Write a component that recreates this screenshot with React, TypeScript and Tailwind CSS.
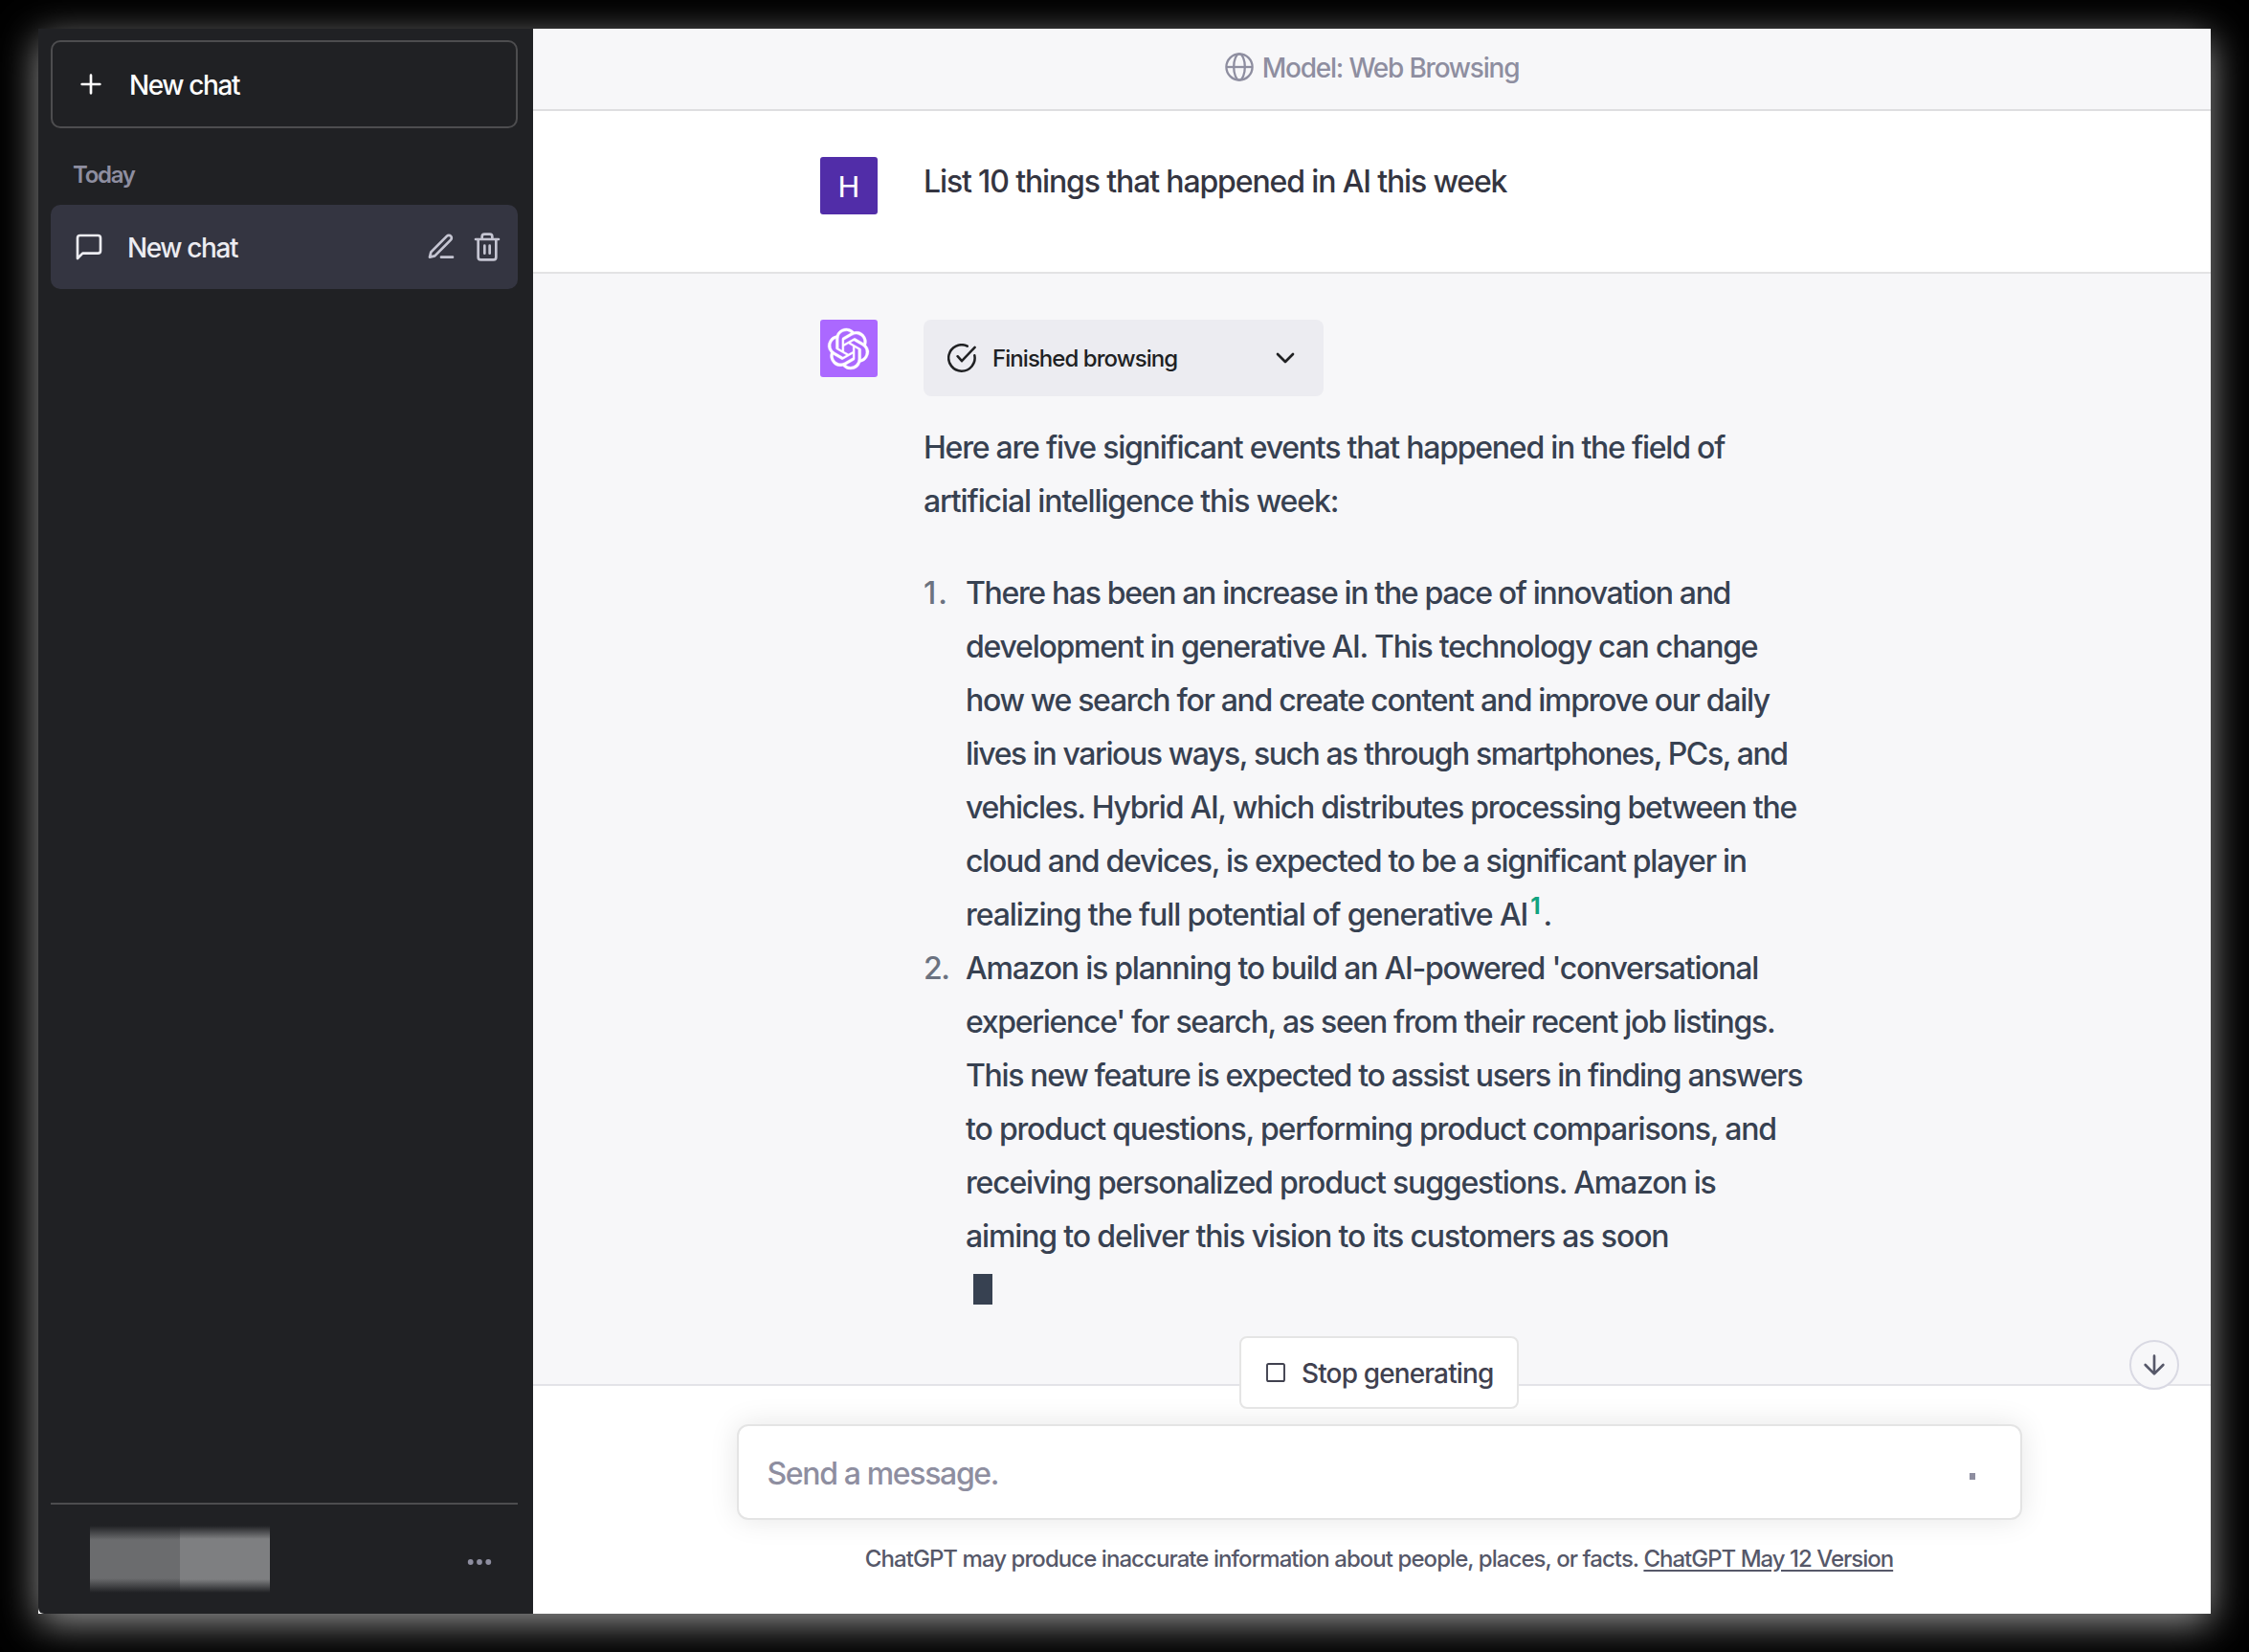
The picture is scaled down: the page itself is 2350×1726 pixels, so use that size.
import type { ReactNode } from "react";
import { SiOpenai } from "react-icons/si";

function Icon({ children, className, strokeWidth = 2 }: { children: ReactNode; className?: string; strokeWidth?: number }) {
  return (
    <svg
      viewBox="0 0 24 24"
      fill="none"
      stroke="currentColor"
      strokeWidth={strokeWidth}
      strokeLinecap="round"
      strokeLinejoin="round"
      className={`size-8 shrink-0 ${className ?? ""}`}
    >
      {children}
    </svg>
  );
}

function Line({ track, children }: { track: string; children: ReactNode }) {
  return <span className={`block whitespace-nowrap ${track}`}>{children}</span>;
}

function Sidebar() {
  return (
    <aside className="flex w-[517px] shrink-0 flex-col rounded-bl-[6px] bg-[#202124] pt-3 pr-4 pl-[13px]">
      <button className="flex h-[92px] items-center gap-6 rounded-[10px] border-2 border-[#4d4d4f] px-6 text-[28px] tracking-[-1.4px] text-white">
        <Icon>
          <path d="M12 5v14M5 12h14" />
        </Icon>
        <span className="pt-0.5">New chat</span>
      </button>
      <h3 className="mt-[31px] h-9 pl-[23px] text-2xl leading-9 font-semibold tracking-[-1.3px] text-[#8e8ea0]">Today</h3>
      <div className="mt-[13px] flex h-[88px] items-center rounded-[10px] bg-[#343541] pr-4 pl-6 text-[#ececf1]">
        <Icon>
          <path d="M21 15a2 2 0 0 1-2 2H7l-4 4V5a2 2 0 0 1 2-2h14a2 2 0 0 1 2 2z" />
        </Icon>
        <span className="ml-6 flex-1 pt-0.5 text-[28px] tracking-[-1.4px]">New chat</span>
        <div className="flex gap-4 text-[#c5c5d2]">
          <Icon>
            <path d="M12 20h9" />
            <path d="M16.5 3.5a2.121 2.121 0 0 1 3 3L7 19l-4 1 1-4L16.5 3.5z" />
          </Icon>
          <Icon>
            <path d="M3 6h18M19 6v14a2 2 0 0 1-2 2H7a2 2 0 0 1-2-2V6m3 0V4a2 2 0 0 1 2-2h4a2 2 0 0 1 2 2v2M10 11v6M14 11v6" />
          </Icon>
        </div>
      </div>
      <div className="mt-auto flex h-[116px] items-center justify-between border-t-2 border-[#4d4d4f] pr-6 pl-[41px]">
        <div className="flex h-[73px] pt-px">
          <div className="w-[94px] bg-[linear-gradient(to_bottom,#202124_0px,#6b6c6e_15px,#6b6c6e_55px,#202124_70px)]" />
          <div className="w-[94px] bg-[linear-gradient(to_bottom,#202124_0px,#7e7f81_14px,#7e7f81_56px,#202124_70px)]" />
        </div>
        <svg viewBox="0 0 32 32" fill="currentColor" className="mt-1.5 size-8 text-[#8e8ea0]">
          <circle cx="6.7" cy="16" r="2.9" />
          <circle cx="16" cy="16" r="2.9" />
          <circle cx="25.3" cy="16" r="2.9" />
        </svg>
      </div>
    </aside>
  );
}

function Header() {
  return (
    <header className="flex h-[86px] items-center justify-center gap-[9px] border-b-2 border-[#dedee0] bg-[#f7f7f9] pb-1 text-[28px] tracking-[-1.22px] text-[#8e8ea0]">
      <svg viewBox="0 0 30 30" fill="none" stroke="currentColor" strokeWidth="2.3" className="size-[30px]">
        <circle cx="15" cy="15" r="13.6" />
        <ellipse cx="15" cy="15" rx="5.8" ry="13.6" />
        <path d="M1.4 15h27.2" />
      </svg>
      <span className="pt-0.5">Model: Web Browsing</span>
    </header>
  );
}

function Answer() {
  return (
    <div className="text-[32px] leading-[56px] text-[#374151]">
      <p className="mt-[26px]">
        <Line track="tracking-[-1.23px]">Here are five significant events that happened in the field of</Line>
        <Line track="tracking-[-1.12px]">artificial intelligence this week:</Line>
      </p>
      <ol className="mt-10">
        <li className="flex">
          <span className="w-11 shrink-0 tracking-[2px] text-[#6b7280]">1.</span>
          <div>
            <Line track="tracking-[-1.34px]">There has been an increase in the pace of innovation and</Line>
            <Line track="tracking-[-1.23px]">development in generative AI. This technology can change</Line>
            <Line track="tracking-[-1.32px]">how we search for and create content and improve our daily</Line>
            <Line track="tracking-[-1.42px]">lives in various ways, such as through smartphones, PCs, and</Line>
            <Line track="tracking-[-1.26px]">vehicles. Hybrid AI, which distributes processing between the</Line>
            <Line track="tracking-[-1.26px]">cloud and devices, is expected to be a significant player in</Line>
            <Line track="tracking-[-1.09px]">
              realizing the full potential of generative AI
              <sup className="ml-[3px] text-2xl font-bold text-[#10a37f]">1</sup>
              <span className="ml-1">.</span>
            </Line>
          </div>
        </li>
        <li className="flex">
          <span className="w-11 shrink-0 tracking-[-1.5px] text-[#6b7280]">2.</span>
          <div>
            <Line track="tracking-[-1.23px]">Amazon is planning to build an AI-powered 'conversational</Line>
            <Line track="tracking-[-1.3px]">experience' for search, as seen from their recent job listings.</Line>
            <Line track="tracking-[-1.33px]">This new feature is expected to assist users in finding answers</Line>
            <Line track="tracking-[-1.18px]">to product questions, performing product comparisons, and</Line>
            <Line track="tracking-[-1.2px]">receiving personalized product suggestions. Amazon is</Line>
            <Line track="tracking-[-1.14px]">aiming to deliver this vision to its customers as soon</Line>
            <span className="mt-[11px] ml-2 block h-8 w-[20px] bg-[#374151]" />
          </div>
        </li>
      </ol>
    </div>
  );
}

function Conversation() {
  return (
    <>
      <section className="flex h-[170px] gap-12 border-b-2 border-[#e3e3e4] pt-12 pl-[300px]">
        <div className="flex size-[60px] items-center justify-center rounded-[3px] bg-[#512da8] pt-0.5 font-['Roboto'] text-[32px] font-normal text-white">
          H
        </div>
        <p className="-mt-0.5 text-[32px] leading-[56px] tracking-[-1.14px] whitespace-nowrap text-[#343541]">
          List 10 things that happened in AI this week
        </p>
      </section>
      <section className="flex flex-1 gap-12 border-b-2 border-[#e3e3e8] bg-[#f7f7f9] pt-12 pl-[300px]">
        <div className="flex size-[60px] shrink-0 items-center justify-center rounded-[3px] bg-[#ab68ff] pr-px text-white">
          <SiOpenai className="size-[43px] overflow-visible stroke-white stroke-[0.2]" />
        </div>
        <div>
          <div className="flex h-20 w-[418px] items-center rounded-lg bg-[#ececf1] px-6 text-[#202123]">
            <svg
              viewBox="0 0 30 30"
              fill="none"
              stroke="currentColor"
              strokeWidth="2.5"
              strokeLinecap="round"
              strokeLinejoin="round"
              className="ml-px size-[30px]"
            >
              <path d="M20.8 2.6A13.7 13.7 0 1 0 28.3 12.2" />
              <path d="M10.6 13.2 15 18.2 28.6 3.9" />
            </svg>
            <span className="ml-[17px] flex-1 pt-0.5 text-2xl tracking-[-0.95px]">Finished browsing</span>
            <Icon>
              <path d="m6 9 6 6 6-6" />
            </Icon>
          </div>
          <Answer />
        </div>
      </section>
    </>
  );
}

function Composer() {
  return (
    <footer className="relative flex h-[238px] flex-col items-center pl-[15px]">
      <button className="absolute -top-12 right-[33px] flex size-[52px] items-center justify-center rounded-full border-2 border-[#d9d9e3] bg-[#f7f7f9] text-[#565869]">
        <Icon>
          <path d="M12 5v14M19 12l-7 7-7-7" />
        </Icon>
      </button>
      <button className="relative z-10 -mt-[52px] flex h-[76px] w-[292px] items-center rounded-lg border-2 border-[#e5e5e5] bg-white pl-6 text-[28px] tracking-[-0.87px] text-[#40414f]">
        <Icon strokeWidth={1.9} className="!size-6">
          <rect x="3" y="3" width="18" height="18" rx="1.6" />
        </Icon>
        <span className="ml-[15px] pt-0.5 whitespace-nowrap">Stop generating</span>
      </button>
      <div className="mt-4 flex h-[100px] w-[1343px] items-center justify-between rounded-xl border-2 border-[#e4e4e4] bg-white pt-0.5 pr-[47px] pl-[30px] shadow-[0_0_30px_rgba(0,0,0,0.1)]">
        <span className="pt-0.5 text-[32px] tracking-[-1.35px] text-[#8e8ea0]">Send a message.</span>
        <span className="mt-1.5 h-[7px] w-1.5 bg-[#8e8ea0]" />
      </div>
      <p className="mt-[23px] text-2xl leading-9 whitespace-nowrap text-[#565869]">
        <span className="tracking-[-0.94px]">ChatGPT may produce inaccurate information about people, places, or facts. </span>
        <a className="tracking-[-1px] underline decoration-2 underline-offset-3">ChatGPT May 12 Version</a>
      </p>
    </footer>
  );
}

export default function App() {
  return (
    <div className="h-[1726px] w-[2350px] overflow-hidden bg-black px-10 pt-[30px] font-['Inter',sans-serif] font-[450] antialiased">
      <div className="flex h-[1656px] bg-white shadow-[0_10px_38px_rgba(255,255,255,0.58)]">
        <Sidebar />
        <main className="flex flex-1 flex-col bg-white">
          <Header />
          <Conversation />
          <Composer />
        </main>
      </div>
    </div>
  );
}
